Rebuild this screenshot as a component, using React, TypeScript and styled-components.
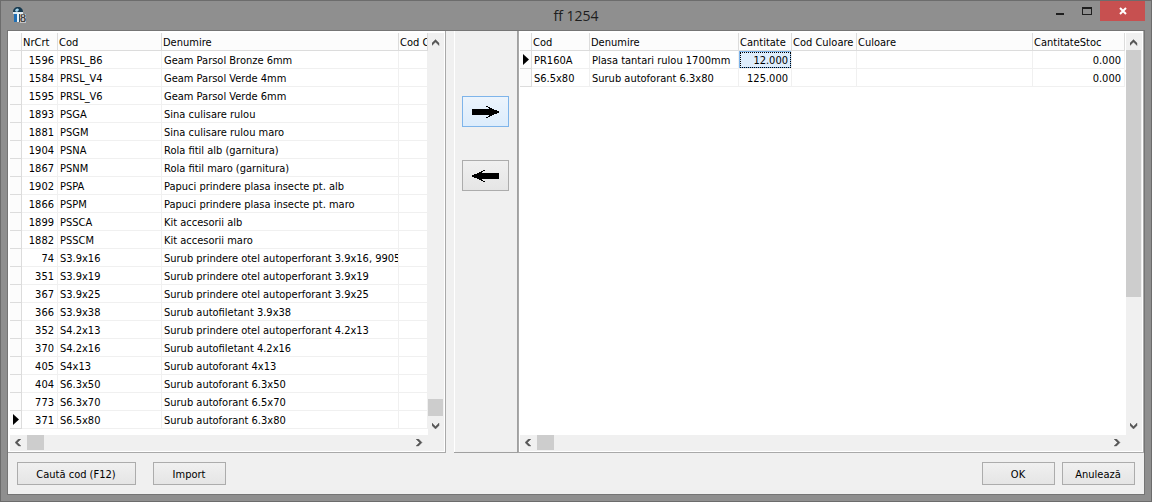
import React from "react";
import styled, { createGlobalStyle, css } from "styled-components";

const GlobalStyle = createGlobalStyle`
  *, *::before, *::after { box-sizing: border-box; }
  body {
    margin: 0;
    color: #000;
    font-family: "DejaVu Sans Condensed", "Noto Sans", sans-serif;
    font-size: 11px;
    line-height: 14px;
  }
  button { font: inherit; color: inherit; margin: 0; padding: 0; }
`;

const Window = styled.div`
  display: flex;
  flex-direction: column;
  height: 100vh;
  padding: 0 6px 6px;
  background: #8f8f8f;
  border: 1px solid #6c6c6c;
`;

const TitleBar = styled.header`
  display: grid;
  grid-template-columns: 1fr auto 1fr;
  flex: none;
  height: 29px;
  padding: 0 0 0 5px;
`;

const AppIcon = styled.svg`
  width: 16px;
  height: 16px;
  margin-top: 6px;
`;

const Title = styled.h1`
  margin: 0;
  padding: 5px 5px 0 0;
  font: 14px/20px "Open Sans", sans-serif;
  color: #1e1e1e;
`;

const WindowButtons = styled.div`
  display: flex;
  justify-content: flex-end;
`;

const WindowButton = styled.button<{ $close?: boolean }>`
  width: ${(p) => (p.$close ? 45 : 27)}px;
  height: 20px;
  border: 0;
  background: ${(p) => (p.$close ? "#c75050" : "transparent")};
  svg { display: block; margin: 0 auto; }
`;

const Client = styled.main`
  display: flex;
  flex: 1;
  flex-direction: column;
  min-height: 0;
  background: #f0f0f0;
  border: 1px solid #757575;
`;

const Panels = styled.div`
  display: flex;
  flex: 1;
  min-height: 0;
`;

const GridPanel = styled.section<{ $side: "left" | "right" }>`
  display: grid;
  grid-template-columns: minmax(0, 1fr) 16px;
  grid-template-rows: minmax(0, 1fr) 16px;
  flex: ${(p) => (p.$side === "left" ? "0 1 438px" : "1 1 0")};
  min-width: 0;
  padding: ${(p) => (p.$side === "left" ? "2px 1px 1px 2px" : "2px 1px 1px 1px")};
  background: #fff;
  border: 0 solid #a9a9a9;
  border-width: ${(p) => (p.$side === "left" ? "0 1px 1px 0" : "0 1px 1px 1px")};
`;

const Sheet = styled.div`
  overflow: hidden;
`;

const OrderSheet = styled(Sheet)`
  padding-right: 1px;
`;

const Table = styled.table`
  width: 100%;
  table-layout: fixed;
  border-spacing: 0;
`;

const clip = css`
  height: 18px;
  overflow: hidden;
  white-space: nowrap;
  vertical-align: top;
  border: 0 solid #f0f0f0;
  border-width: 0 1px 1px 0;
`;

const HeadCell = styled.th`
  ${clip}
  padding: 3px 0 0 1px;
  font-weight: normal;
  text-align: left;
  background: #fcfcfc;
  border-color: #dcdcdc;
`;

const Cell = styled.td<{ $right?: boolean; $selected?: boolean }>`
  ${clip}
  padding: 3px 3px 0 2px;
  text-align: ${(p) => (p.$right ? "right" : "left")};
  ${(p) =>
    p.$selected &&
    css`
      background: #deedfc;
      box-shadow: inset 0 0 0 1px #7eb4ea;
      outline: 1px dotted #000;
      outline-offset: -2px;
    `}
`;

const MarkCell = styled.td`
  ${clip}
  padding: 3px 0 0 3px;
  background: #fcfcfc;
  border-color: #dcdcdc;
  svg { display: block; }
`;

const ScrollBar = styled.div<{ $vertical?: boolean }>`
  display: flex;
  flex-direction: ${(p) => (p.$vertical ? "column" : "row")};
  background: #f0f0f0;
`;

const ScrollArrow = styled.button<{ $vertical?: boolean }>`
  display: grid;
  flex: none;
  place-items: center;
  width: ${(p) => (p.$vertical ? 16 : 17)}px;
  height: ${(p) => (p.$vertical ? 17 : 16)}px;
  border: 0;
  background: transparent;
`;

const Track = styled.div<{ $vertical?: boolean; $end?: boolean }>`
  display: flex;
  flex: 1;
  flex-direction: ${(p) => (p.$vertical ? "column" : "row")};
  justify-content: ${(p) => (p.$end ? "flex-end" : "flex-start")};
  min-height: 0;
  padding-bottom: ${(p) => (p.$end ? 2 : 0)}px;
`;

const Thumb = styled.div<{ $vertical?: boolean; $length: string }>`
  width: ${(p) => (p.$vertical ? "15px" : p.$length)};
  height: ${(p) => (p.$vertical ? p.$length : "15px")};
  background: #cdcdcd;
`;

const Corner = styled.div`
  background: #f0f0f0;
`;

const TransferPanel = styled.section`
  display: flex;
  flex: none;
  flex-direction: column;
  align-items: center;
  gap: 33px;
  width: 64px;
  margin-left: 8px;
  padding-top: 65px;
  border: 0 solid #a0a0a0;
  border-width: 0 1px 1px 0;
  box-shadow: inset 1px 0 #fff;
`;

const PushButton = styled.button<{ $wide?: boolean }>`
  width: ${(p) => (p.$wide ? 119 : 73)}px;
  height: 23px;
  padding: 2px 1px 0 0;
  background: linear-gradient(#f0f0f0, #e5e5e5);
  border: 1px solid #acacac;
`;

const TransferButton = styled.button<{ $hot?: boolean }>`
  display: grid;
  place-items: center;
  width: 47px;
  height: 31px;
  background: ${(p) => (p.$hot ? "linear-gradient(#ecf4fc, #dcecfc)" : "linear-gradient(#f0f0f0, #e5e5e5)")};
  border: 1px solid ${(p) => (p.$hot ? "#7eb4ea" : "#acacac")};
`;

const Footer = styled.footer`
  display: flex;
  flex: none;
  justify-content: space-between;
  padding: 9px;
`;

const Actions = styled.div<{ $gap: number }>`
  display: flex;
  gap: ${(p) => p.$gap}px;
`;

const chevrons = {
  up: "M0 5 3.5 1.5 7 5V7.5L3.5 4 0 7.5Z",
  down: "M0 0 3.5 3.5 7 0V2.5L3.5 6 0 2.5Z",
  left: "M6 0 2.5 3.5 6 7H3.5L0 3.5 3.5 0Z",
  right: "M0 0 3.5 3.5 0 7H2.5L6 3.5 2.5 0Z",
};

function Arrow({ to }: { to: keyof typeof chevrons }) {
  return (
    <ScrollArrow type="button" aria-label={`Scroll ${to}`} $vertical={to === "up" || to === "down"}>
      <svg width="8" height="8" viewBox="0 0 8 8">
        <path d={chevrons[to]} fill="#555" stroke="#555" strokeWidth="0.4" />
      </svg>
    </ScrollArrow>
  );
}

function BlackArrow({ back }: { back?: boolean }) {
  return (
    <svg width="27" height="12" viewBox="0 0 27 12" shapeRendering="crispEdges">
      <path
        transform={back ? "matrix(-1 0 0 1 27 0)" : undefined}
        d="M14 0H16V1H18V2H20V3H22V4H25V5H27V7H25V8H22V9H20V10H18V11H16V12H14V11H16V10H17V9H0V3H17V2H16V1H14Z"
      />
    </svg>
  );
}

function Marker() {
  return (
    <svg width="6" height="11" viewBox="0 0 6 11">
      <path d="M0 0 6 5.5 0 11Z" />
    </svg>
  );
}

type Column = { label: string; width?: number; right?: boolean };

const stockColumns: Column[] = [
  { label: "NrCrt", width: 36, right: true },
  { label: "Cod", width: 104 },
  { label: "Denumire", width: 237 },
  { label: "Cod C" },
];

const stockRows = [
  ["1596", "PRSL_B6", "Geam Parsol Bronze 6mm"],
  ["1584", "PRSL_V4", "Geam Parsol Verde 4mm"],
  ["1595", "PRSL_V6", "Geam Parsol Verde 6mm"],
  ["1893", "PSGA", "Sina culisare rulou"],
  ["1881", "PSGM", "Sina culisare rulou maro"],
  ["1904", "PSNA", "Rola fitil alb (garnitura)"],
  ["1867", "PSNM", "Rola fitil maro (garnitura)"],
  ["1902", "PSPA", "Papuci prindere plasa insecte pt. alb"],
  ["1866", "PSPM", "Papuci prindere plasa insecte pt. maro"],
  ["1899", "PSSCA", "Kit accesorii alb"],
  ["1882", "PSSCM", "Kit accesorii maro"],
  ["74", "S3.9x16", "Surub prindere otel autoperforant 3.9x16, 99058"],
  ["351", "S3.9x19", "Surub prindere otel autoperforant 3.9x19"],
  ["367", "S3.9x25", "Surub prindere otel autoperforant 3.9x25"],
  ["366", "S3.9x38", "Surub autofiletant 3.9x38"],
  ["352", "S4.2x13", "Surub prindere otel autoperforant 4.2x13"],
  ["370", "S4.2x16", "Surub autofiletant 4.2x16"],
  ["405", "S4x13", "Surub autoforant 4x13"],
  ["404", "S6.3x50", "Surub autoforant 6.3x50"],
  ["773", "S6.3x70", "Surub autoforant 6.5x70"],
  ["371", "S6.5x80", "Surub autoforant 6.3x80"],
];

const orderColumns: Column[] = [
  { label: "Cod", width: 58 },
  { label: "Denumire", width: 149 },
  { label: "Cantitate", width: 53, right: true },
  { label: "Cod Culoare", width: 65 },
  { label: "Culoare" },
  { label: "CantitateStoc", width: 92, right: true },
];

const orderRows = [
  ["PR160A", "Plasa tantari rulou 1700mm", "12.000", "", "", "0.000"],
  ["S6.5x80", "Surub autoforant 6.3x80", "125.000", "", "", "0.000"],
];

type DataGridProps = {
  label: string;
  columns: Column[];
  rows: string[][];
  current: number;
  selectedColumn?: number;
};

function DataGrid({ label, columns, rows, current, selectedColumn }: DataGridProps) {
  return (
    <Table aria-label={label}>
      <colgroup>
        <col width={12} />
        {columns.map((c) => (
          <col key={c.label} width={c.width} />
        ))}
      </colgroup>
      <thead>
        <tr>
          <HeadCell />
          {columns.map((c) => (
            <HeadCell key={c.label}>{c.label}</HeadCell>
          ))}
        </tr>
      </thead>
      <tbody>
        {rows.map((row, r) => (
          <tr key={row.join()}>
            <MarkCell>{r === current && <Marker />}</MarkCell>
            {columns.map((c, i) => (
              <Cell key={c.label} $right={c.right} $selected={r === current && i === selectedColumn}>
                {row[i]}
              </Cell>
            ))}
          </tr>
        ))}
      </tbody>
    </Table>
  );
}

export default function App() {
  return (
    <>
      <GlobalStyle />
      <Window>
        <TitleBar>
          <AppIcon viewBox="0 0 16 16">
            <path d="M1 5C1 2 3 0 6 0S11 2 11 5Z" fill="#16394f" />
            <path d="M3 4C4 1 6 1 7 3L5 5Z" fill="#9fd0ea" />
            <path d="M1 5H11V7H1Z" fill="#dfeaf0" />
            <path d="M2 7H5V15H2Z" fill="#1f6fb5" />
            <path d="M5 6H8V15H5Z" fill="#e9f3f8" />
            <path d="M7 7H8V15H7Z" fill="#2b4d66" />
            <path d="M8 7H14V16H8Z" fill="#c4c4c4" />
            <text x="8" y="15" fontFamily="Liberation Serif" fontSize="12" fill="#222">8</text>
          </AppIcon>
          <Title>ff 1254</Title>
          <WindowButtons>
            <WindowButton type="button" aria-label="Minimize">
              <svg width="10" height="10" viewBox="0 0 10 10"><path d="M1 7H9V9H1Z" fill="#1e1e1e" /></svg>
            </WindowButton>
            <WindowButton type="button" aria-label="Maximize">
              <svg width="10" height="10" viewBox="0 0 10 10"><path d="M0 1H10V9H0ZM1 3V8H9V3Z" fill="#1e1e1e" fillRule="evenodd" /></svg>
            </WindowButton>
            <WindowButton type="button" aria-label="Close" $close>
              <svg width="8" height="8" viewBox="0 0 8 8"><path d="M1 1 7 7M7 1 1 7" stroke="#fff" strokeWidth="2" /></svg>
            </WindowButton>
          </WindowButtons>
        </TitleBar>
        <Client>
          <Panels>
            <GridPanel $side="left">
              <Sheet>
                <DataGrid label="Articole" columns={stockColumns} rows={stockRows} current={20} />
              </Sheet>
              <ScrollBar $vertical>
                <Arrow to="up" />
                <Track $vertical $end><Thumb $vertical $length="17px" /></Track>
                <Arrow to="down" />
              </ScrollBar>
              <ScrollBar>
                <Arrow to="left" />
                <Track><Thumb $length="17px" /></Track>
                <Arrow to="right" />
              </ScrollBar>
              <Corner />
            </GridPanel>
            <TransferPanel>
              <TransferButton type="button" aria-label="Add" $hot><BlackArrow /></TransferButton>
              <TransferButton type="button" aria-label="Remove"><BlackArrow back /></TransferButton>
            </TransferPanel>
            <GridPanel $side="right">
              <OrderSheet>
                <DataGrid label="Selectate" columns={orderColumns} rows={orderRows} current={0} selectedColumn={2} />
              </OrderSheet>
              <ScrollBar $vertical>
                <Arrow to="up" />
                <Track $vertical><Thumb $vertical $length="67%" /></Track>
                <Arrow to="down" />
              </ScrollBar>
              <ScrollBar>
                <Arrow to="left" />
                <Track><Thumb $length="17px" /></Track>
                <Arrow to="right" />
              </ScrollBar>
              <Corner />
            </GridPanel>
          </Panels>
          <Footer>
            <Actions $gap={17}>
              <PushButton type="button" $wide>Caută cod (F12)</PushButton>
              <PushButton type="button">Import</PushButton>
            </Actions>
            <Actions $gap={7}>
              <PushButton type="button">OK</PushButton>
              <PushButton type="button">Anulează</PushButton>
            </Actions>
          </Footer>
        </Client>
      </Window>
    </>
  );
}
